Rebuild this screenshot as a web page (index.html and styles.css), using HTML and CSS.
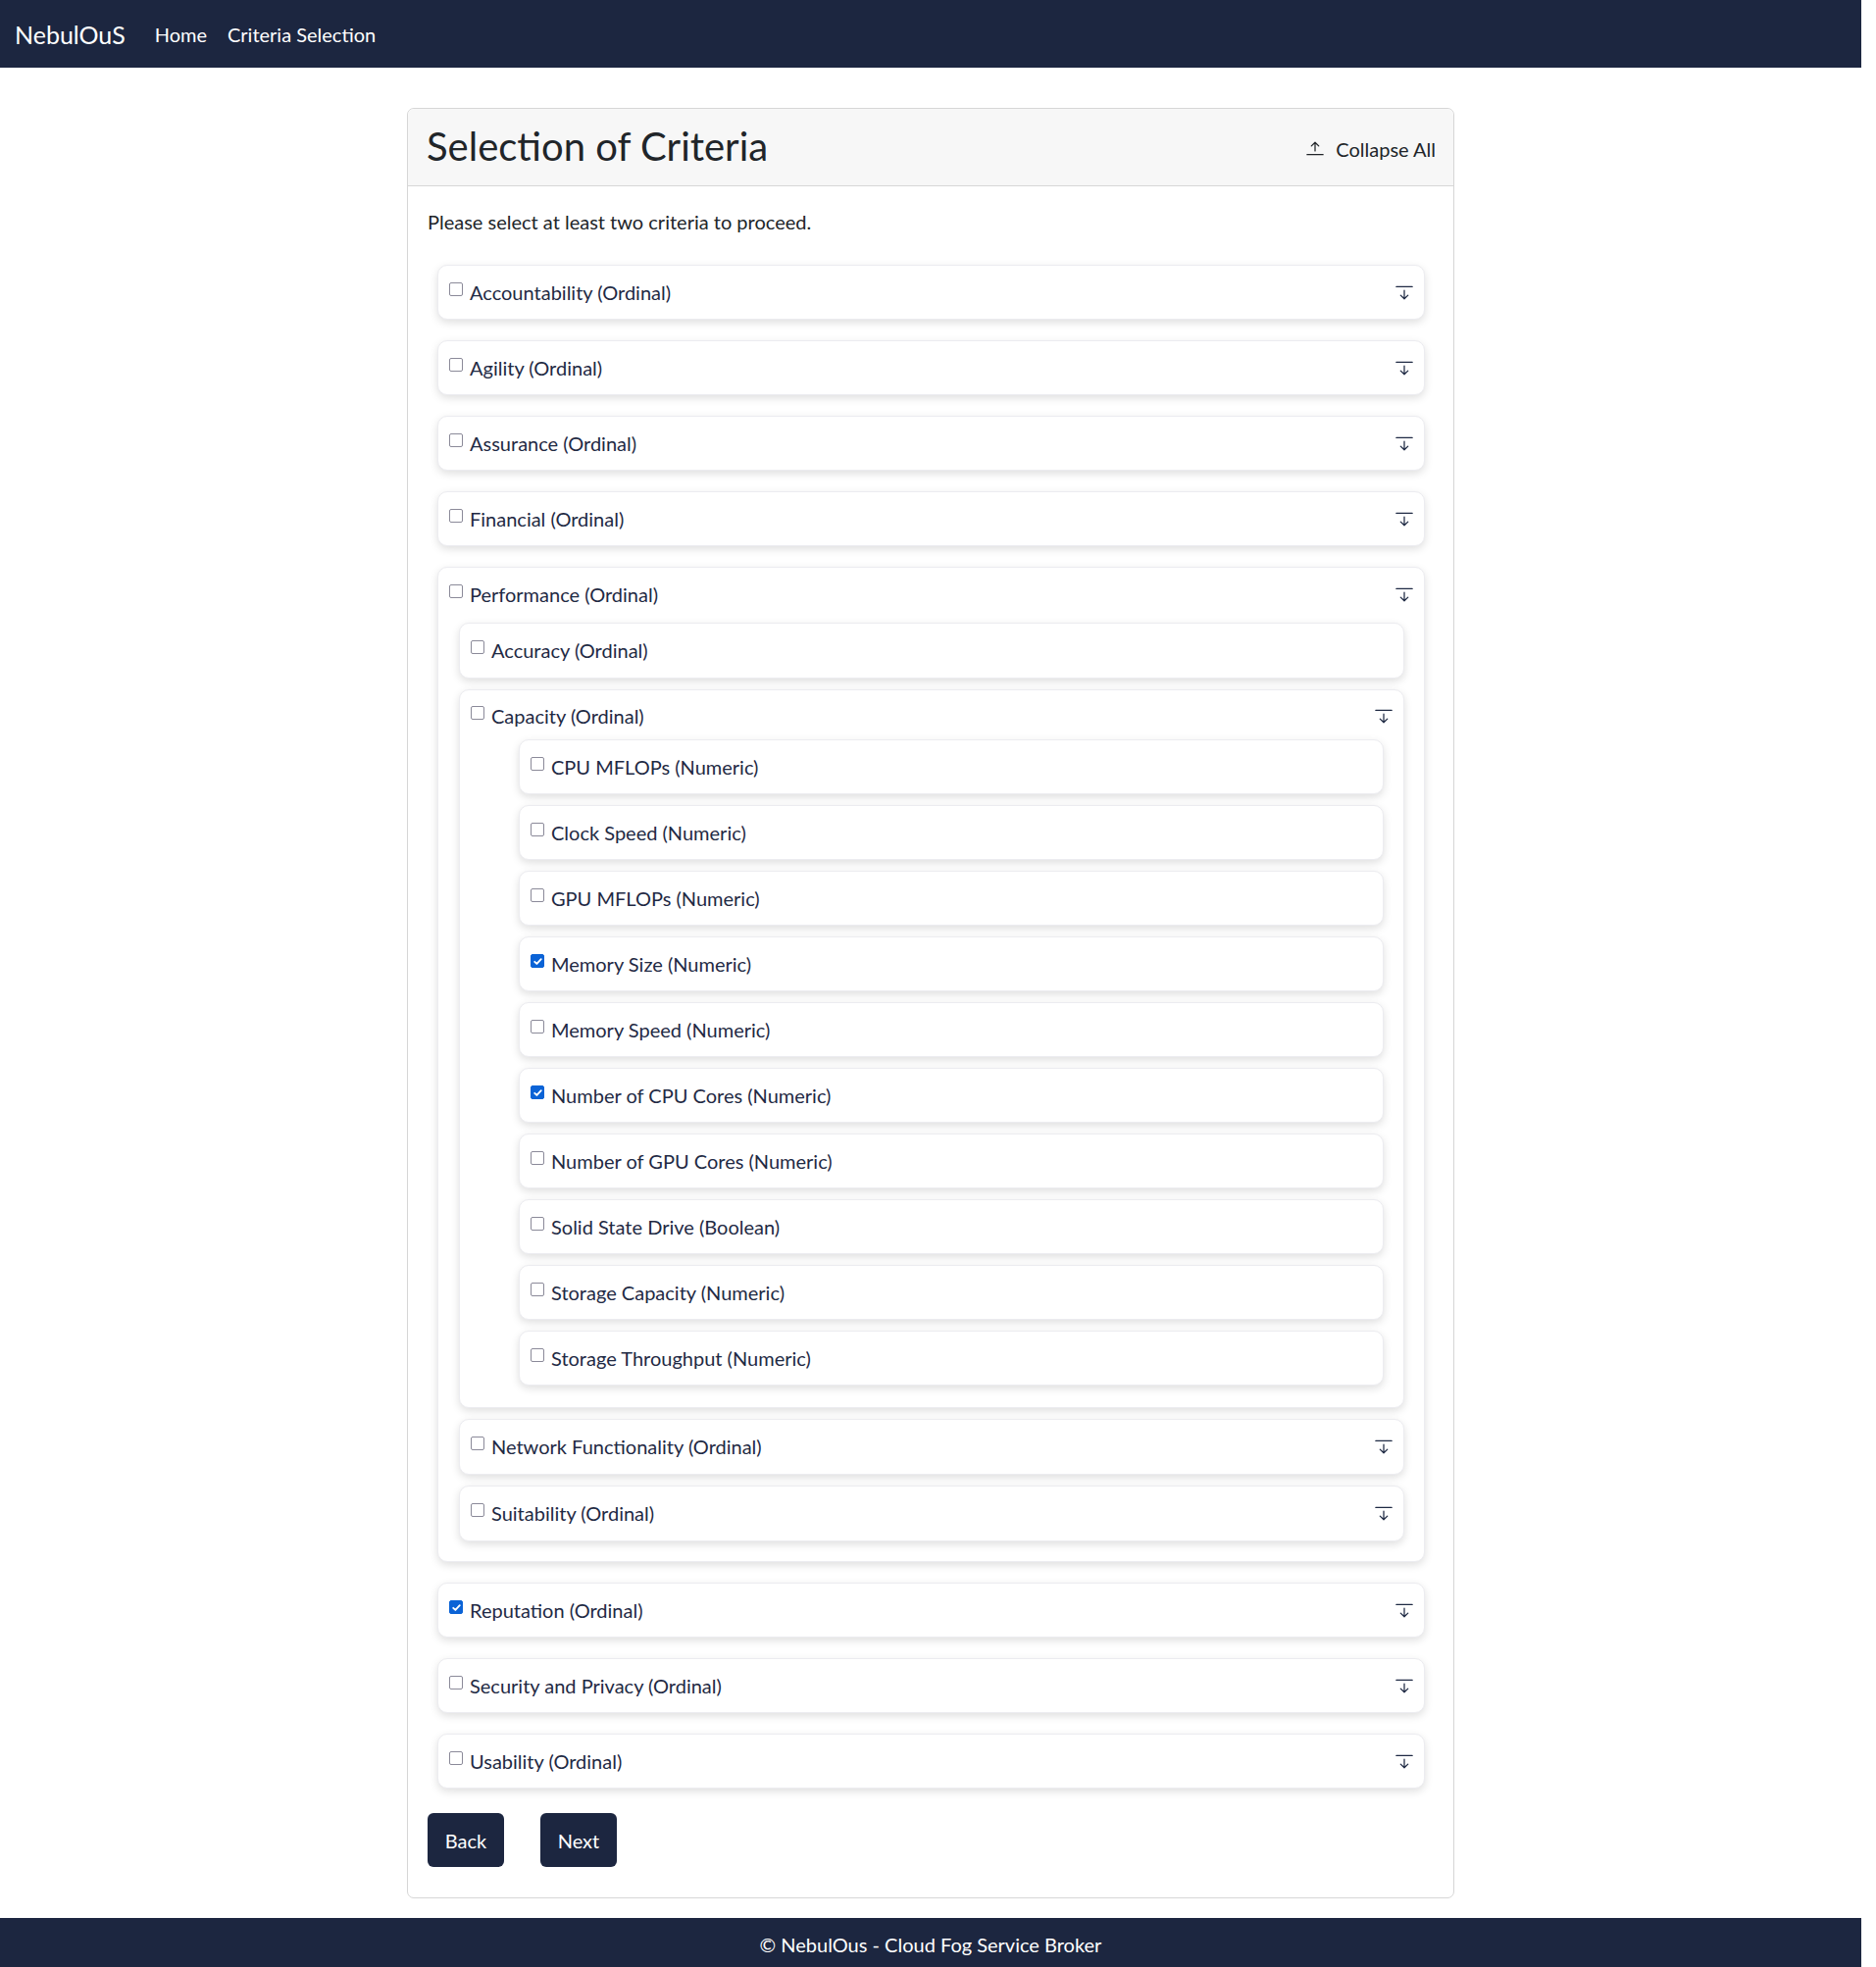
FILE: index.html
```html
<!DOCTYPE html>
<html lang="en">
<head>
<meta charset="utf-8">
<title>NebulOuS - Criteria Selection</title>
<link rel="stylesheet" href="styles.css">
</head>
<body>
<div class="page">
  <nav class="navbar">
    <a class="brand" href="#">NebulOuS</a>
    <a class="nav-link" href="#">Home</a>
    <a class="nav-link" href="#">Criteria Selection</a>
  </nav>

  <main class="main">
    <section class="card">
      <header class="card-header">
        <h2 class="card-title">Selection of Criteria</h2>
        <button class="collapse-all" type="button">
          <svg class="icon" viewBox="0 0 16 16" fill="currentColor"><path fill-rule="evenodd" d="M8 10a.5.5 0 0 0 .5-.5V3.707l2.146 2.147a.5.5 0 0 0 .708-.708l-3-3a.5.5 0 0 0-.708 0l-3 3a.5.5 0 1 0 .708.708L7.5 3.707V9.5a.5.5 0 0 0 .5.5m-7 2.5a.5.5 0 0 1 .5-.5h13a.5.5 0 0 1 0 1h-13a.5.5 0 0 1-.5-.5"/></svg>
          <span>Collapse All</span>
        </button>
      </header>
      <div class="card-body">
        <p class="hint">Please select at least two criteria to proceed.</p>

        <ul class="tree">
          <li class="node">
            <div class="row"><label class="check"><input type="checkbox"><span>Accountability (Ordinal)</span></label><span class="toggle"><svg class="icon" viewBox="0 0 16 16" fill="currentColor"><path fill-rule="evenodd" d="M1 3.5a.5.5 0 0 1 .5-.5h13a.5.5 0 0 1 0 1h-13a.5.5 0 0 1-.5-.5M8 6a.5.5 0 0 1 .5.5v5.793l2.146-2.147a.5.5 0 0 1 .708.708l-3 3a.5.5 0 0 1-.708 0l-3-3a.5.5 0 0 1 .708-.708L7.5 12.293V6.5A.5.5 0 0 1 8 6"/></svg></span></div>
          </li>
          <li class="node">
            <div class="row"><label class="check"><input type="checkbox"><span>Agility (Ordinal)</span></label><span class="toggle"><svg class="icon" viewBox="0 0 16 16" fill="currentColor"><path fill-rule="evenodd" d="M1 3.5a.5.5 0 0 1 .5-.5h13a.5.5 0 0 1 0 1h-13a.5.5 0 0 1-.5-.5M8 6a.5.5 0 0 1 .5.5v5.793l2.146-2.147a.5.5 0 0 1 .708.708l-3 3a.5.5 0 0 1-.708 0l-3-3a.5.5 0 0 1 .708-.708L7.5 12.293V6.5A.5.5 0 0 1 8 6"/></svg></span></div>
          </li>
          <li class="node">
            <div class="row"><label class="check"><input type="checkbox"><span>Assurance (Ordinal)</span></label><span class="toggle"><svg class="icon" viewBox="0 0 16 16" fill="currentColor"><path fill-rule="evenodd" d="M1 3.5a.5.5 0 0 1 .5-.5h13a.5.5 0 0 1 0 1h-13a.5.5 0 0 1-.5-.5M8 6a.5.5 0 0 1 .5.5v5.793l2.146-2.147a.5.5 0 0 1 .708.708l-3 3a.5.5 0 0 1-.708 0l-3-3a.5.5 0 0 1 .708-.708L7.5 12.293V6.5A.5.5 0 0 1 8 6"/></svg></span></div>
          </li>
          <li class="node">
            <div class="row"><label class="check"><input type="checkbox"><span>Financial (Ordinal)</span></label><span class="toggle"><svg class="icon" viewBox="0 0 16 16" fill="currentColor"><path fill-rule="evenodd" d="M1 3.5a.5.5 0 0 1 .5-.5h13a.5.5 0 0 1 0 1h-13a.5.5 0 0 1-.5-.5M8 6a.5.5 0 0 1 .5.5v5.793l2.146-2.147a.5.5 0 0 1 .708.708l-3 3a.5.5 0 0 1-.708 0l-3-3a.5.5 0 0 1 .708-.708L7.5 12.293V6.5A.5.5 0 0 1 8 6"/></svg></span></div>
          </li>
          <li class="node">
            <div class="row"><label class="check"><input type="checkbox"><span>Performance (Ordinal)</span></label><span class="toggle"><svg class="icon" viewBox="0 0 16 16" fill="currentColor"><path fill-rule="evenodd" d="M1 3.5a.5.5 0 0 1 .5-.5h13a.5.5 0 0 1 0 1h-13a.5.5 0 0 1-.5-.5M8 6a.5.5 0 0 1 .5.5v5.793l2.146-2.147a.5.5 0 0 1 .708.708l-3 3a.5.5 0 0 1-.708 0l-3-3a.5.5 0 0 1 .708-.708L7.5 12.293V6.5A.5.5 0 0 1 8 6"/></svg></span></div>
            <ul class="children">
              <li class="node">
                <div class="row"><label class="check"><input type="checkbox"><span>Accuracy (Ordinal)</span></label></div>
              </li>
              <li class="node">
                <div class="row row--tight"><label class="check"><input type="checkbox"><span>Capacity (Ordinal)</span></label><span class="toggle"><svg class="icon" viewBox="0 0 16 16" fill="currentColor"><path fill-rule="evenodd" d="M1 3.5a.5.5 0 0 1 .5-.5h13a.5.5 0 0 1 0 1h-13a.5.5 0 0 1-.5-.5M8 6a.5.5 0 0 1 .5.5v5.793l2.146-2.147a.5.5 0 0 1 .708.708l-3 3a.5.5 0 0 1-.708 0l-3-3a.5.5 0 0 1 .708-.708L7.5 12.293V6.5A.5.5 0 0 1 8 6"/></svg></span></div>
                <ul class="children children--deep">
                  <li class="node"><div class="row"><label class="check"><input type="checkbox"><span>CPU MFLOPs (Numeric)</span></label></div></li>
                  <li class="node"><div class="row"><label class="check"><input type="checkbox"><span>Clock Speed (Numeric)</span></label></div></li>
                  <li class="node"><div class="row"><label class="check"><input type="checkbox"><span>GPU MFLOPs (Numeric)</span></label></div></li>
                  <li class="node"><div class="row"><label class="check"><input type="checkbox" checked><span>Memory Size (Numeric)</span></label></div></li>
                  <li class="node"><div class="row"><label class="check"><input type="checkbox"><span>Memory Speed (Numeric)</span></label></div></li>
                  <li class="node"><div class="row"><label class="check"><input type="checkbox" checked><span>Number of CPU Cores (Numeric)</span></label></div></li>
                  <li class="node"><div class="row"><label class="check"><input type="checkbox"><span>Number of GPU Cores (Numeric)</span></label></div></li>
                  <li class="node"><div class="row"><label class="check"><input type="checkbox"><span>Solid State Drive (Boolean)</span></label></div></li>
                  <li class="node"><div class="row"><label class="check"><input type="checkbox"><span>Storage Capacity (Numeric)</span></label></div></li>
                  <li class="node"><div class="row"><label class="check"><input type="checkbox"><span>Storage Throughput (Numeric)</span></label></div></li>
                </ul>
              </li>
              <li class="node">
                <div class="row"><label class="check"><input type="checkbox"><span>Network Functionality (Ordinal)</span></label><span class="toggle"><svg class="icon" viewBox="0 0 16 16" fill="currentColor"><path fill-rule="evenodd" d="M1 3.5a.5.5 0 0 1 .5-.5h13a.5.5 0 0 1 0 1h-13a.5.5 0 0 1-.5-.5M8 6a.5.5 0 0 1 .5.5v5.793l2.146-2.147a.5.5 0 0 1 .708.708l-3 3a.5.5 0 0 1-.708 0l-3-3a.5.5 0 0 1 .708-.708L7.5 12.293V6.5A.5.5 0 0 1 8 6"/></svg></span></div>
              </li>
              <li class="node">
                <div class="row"><label class="check"><input type="checkbox"><span>Suitability (Ordinal)</span></label><span class="toggle"><svg class="icon" viewBox="0 0 16 16" fill="currentColor"><path fill-rule="evenodd" d="M1 3.5a.5.5 0 0 1 .5-.5h13a.5.5 0 0 1 0 1h-13a.5.5 0 0 1-.5-.5M8 6a.5.5 0 0 1 .5.5v5.793l2.146-2.147a.5.5 0 0 1 .708.708l-3 3a.5.5 0 0 1-.708 0l-3-3a.5.5 0 0 1 .708-.708L7.5 12.293V6.5A.5.5 0 0 1 8 6"/></svg></span></div>
              </li>
            </ul>
          </li>
          <li class="node">
            <div class="row"><label class="check"><input type="checkbox" checked><span>Reputation (Ordinal)</span></label><span class="toggle"><svg class="icon" viewBox="0 0 16 16" fill="currentColor"><path fill-rule="evenodd" d="M1 3.5a.5.5 0 0 1 .5-.5h13a.5.5 0 0 1 0 1h-13a.5.5 0 0 1-.5-.5M8 6a.5.5 0 0 1 .5.5v5.793l2.146-2.147a.5.5 0 0 1 .708.708l-3 3a.5.5 0 0 1-.708 0l-3-3a.5.5 0 0 1 .708-.708L7.5 12.293V6.5A.5.5 0 0 1 8 6"/></svg></span></div>
          </li>
          <li class="node">
            <div class="row"><label class="check"><input type="checkbox"><span>Security and Privacy (Ordinal)</span></label><span class="toggle"><svg class="icon" viewBox="0 0 16 16" fill="currentColor"><path fill-rule="evenodd" d="M1 3.5a.5.5 0 0 1 .5-.5h13a.5.5 0 0 1 0 1h-13a.5.5 0 0 1-.5-.5M8 6a.5.5 0 0 1 .5.5v5.793l2.146-2.147a.5.5 0 0 1 .708.708l-3 3a.5.5 0 0 1-.708 0l-3-3a.5.5 0 0 1 .708-.708L7.5 12.293V6.5A.5.5 0 0 1 8 6"/></svg></span></div>
          </li>
          <li class="node">
            <div class="row"><label class="check"><input type="checkbox"><span>Usability (Ordinal)</span></label><span class="toggle"><svg class="icon" viewBox="0 0 16 16" fill="currentColor"><path fill-rule="evenodd" d="M1 3.5a.5.5 0 0 1 .5-.5h13a.5.5 0 0 1 0 1h-13a.5.5 0 0 1-.5-.5M8 6a.5.5 0 0 1 .5.5v5.793l2.146-2.147a.5.5 0 0 1 .708.708l-3 3a.5.5 0 0 1-.708 0l-3-3a.5.5 0 0 1 .708-.708L7.5 12.293V6.5A.5.5 0 0 1 8 6"/></svg></span></div>
          </li>
        </ul>

        <div class="actions">
          <button class="btn" type="button">Back</button>
          <button class="btn" type="button">Next</button>
        </div>
      </div>
    </section>
  </main>

  <footer class="footer">© NebulOus - Cloud Fog Service Broker</footer>
</div>
</body>
</html>
```

FILE: styles.css
```css
* { box-sizing: border-box; }

html, body {
  margin: 0;
  padding: 0;
  background: #ffffff;
}

body {
  font-family: Lato, "Noto Sans", sans-serif;
  font-size: 20px;
  line-height: 30px;
  color: #212529;
}

.page {
  width: 1898px;
}

/* ---------- navbar ---------- */
.navbar {
  height: 69px;
  background: #1c2640;
  display: flex;
  align-items: center;
  padding: 0 15px;
}

.brand {
  color: #ffffff;
  text-decoration: none;
  font-size: 25px;
  margin-right: 30px;
}

.nav-link {
  color: #ffffff;
  text-decoration: none;
  font-size: 20px;
  margin-right: 21px;
}

/* ---------- main card ---------- */
.main {
  padding: 41px 0 20px;
  display: flex;
  justify-content: center;
}

.card {
  width: 1068px;
  border: 1px solid #d6d6d6;
  border-radius: 7px;
  background: #ffffff;
}

.card-header {
  display: flex;
  align-items: center;
  justify-content: space-between;
  padding: 15px 18px 15px 19px;
  background: #f7f7f7;
  border-bottom: 1px solid #d6d6d6;
  border-radius: 7px 7px 0 0;
  height: 79px;
}

.card-title {
  margin: 0;
  font-size: 40px;
  font-weight: 400;
  line-height: 48px;
  color: #212529;
  position: relative;
  top: -1px;
}

.collapse-all {
  display: flex;
  align-items: center;
  gap: 11px;
  border: 0;
  background: transparent;
  font: inherit;
  color: #212529;
  padding: 0;
  margin-top: 4px;
}

.card-body {
  padding: 20px;
}

.hint {
  margin: 0 0 30px;
  color: #212529;
  position: relative;
  top: 1px;
}

/* ---------- tree ---------- */
.tree,
.children {
  list-style: none;
  margin: 0;
  display: flex;
  flex-direction: column;
}

.tree {
  padding: 0 9px 0 10px;
  gap: 21px;
}

.children {
  padding: 2px 20px 20px 21px;
  gap: 11px;
}

.children > .node > .row {
  padding-bottom: 13px;
}

.children > .node > .row.row--tight {
  padding-top: 11px;
  padding-bottom: 9px;
}

.children--deep {
  padding: 0 20px 22px 60px;
}

.children--deep > .node > .row {
  padding-bottom: 12px;
}

.node {
  background: #ffffff;
  border: 1px solid #ececf0;
  border-radius: 10px;
  box-shadow: 0 3px 8px rgba(0, 0, 0, 0.13);
}

.row {
  display: flex;
  align-items: center;
  justify-content: space-between;
  padding: 12px 10px 12px 11px;
}

.check {
  display: flex;
  align-items: flex-start;
  gap: 7px;
  color: #1f2a44;
}

.check input {
  appearance: none;
  -webkit-appearance: none;
  width: 14px;
  height: 14px;
  margin: 5px 0 0;
  border: 1.5px solid #8b8a99;
  border-radius: 2px;
  background: #ffffff;
  flex: none;
}

.check input:checked {
  border-color: #0b63d6;
  background: #0b63d6 url("data:image/svg+xml,%3Csvg xmlns='http://www.w3.org/2000/svg' viewBox='0 0 12 12'%3E%3Cpath d='M2.4 6.3l2.4 2.4 4.8-5.2' fill='none' stroke='white' stroke-width='2' stroke-linecap='round' stroke-linejoin='round'/%3E%3C/svg%3E") center / 11px 11px no-repeat;
}

.toggle {
  display: flex;
  color: #1f2a44;
}

.icon {
  width: 20px;
  height: 20px;
  display: block;
}

/* ---------- actions ---------- */
.actions {
  display: flex;
  gap: 37px;
  margin-top: 25px;
  margin-bottom: 11px;
}

.btn {
  width: 78px;
  height: 55px;
  border: 0;
  border-radius: 6px;
  background: #1c2640;
  color: #ffffff;
  font: inherit;
  padding: 0;
}

/* ---------- footer ---------- */
.footer {
  background: #1c2640;
  color: #ffffff;
  text-align: center;
  padding: 12px 0;
}
```
